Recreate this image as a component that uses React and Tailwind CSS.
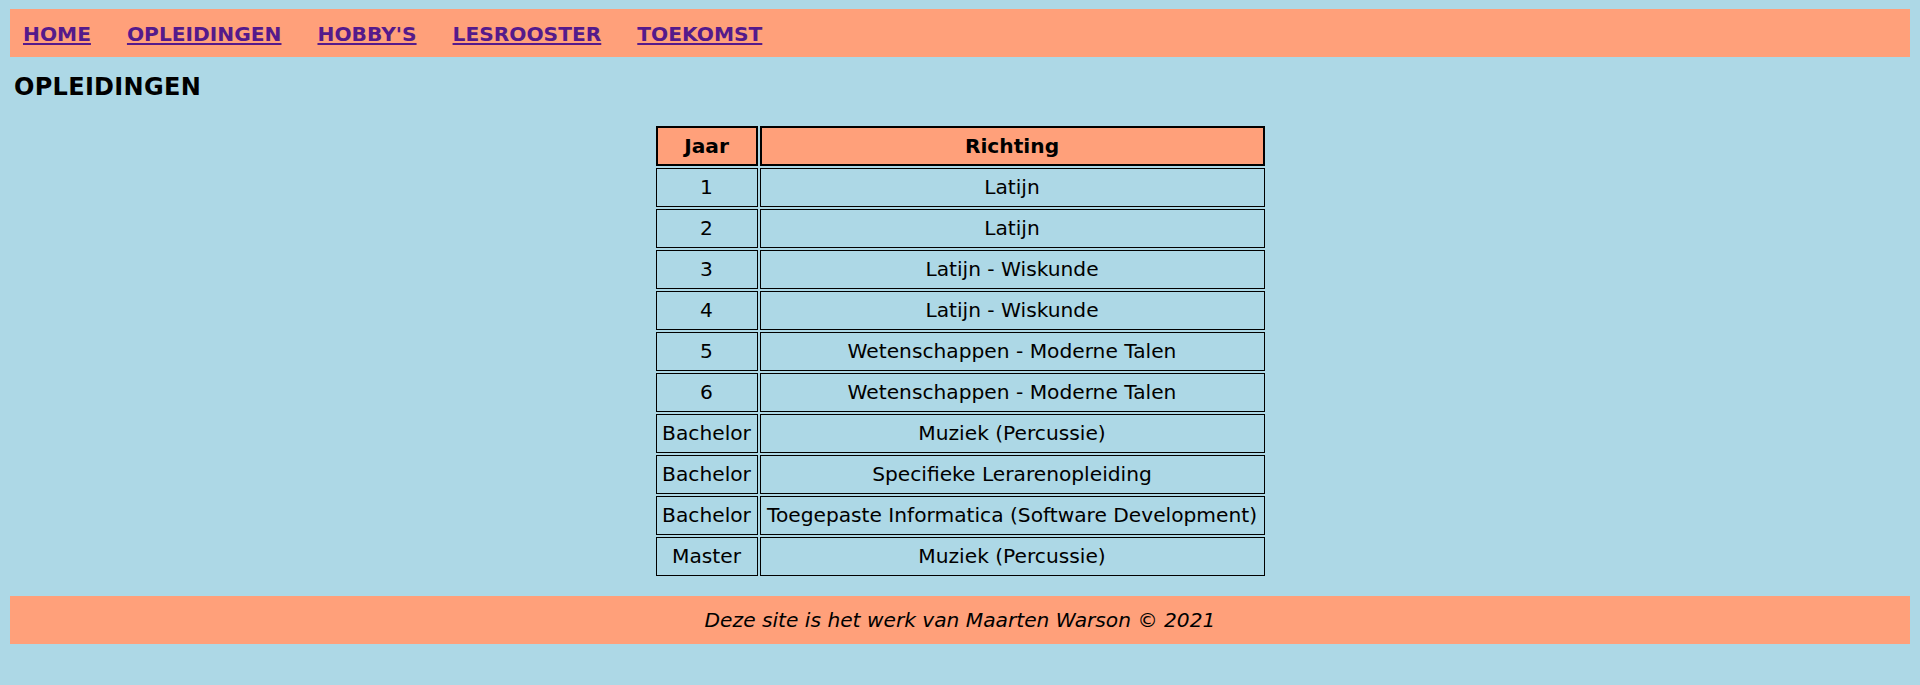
const links = ['HOME', 'OPLEIDINGEN', "HOBBY'S", 'LESROOSTER', 'TOEKOMST'];

const rows = [
  ['1', 'Latijn'],
  ['2', 'Latijn'],
  ['3', 'Latijn - Wiskunde'],
  ['4', 'Latijn - Wiskunde'],
  ['5', 'Wetenschappen - Moderne Talen'],
  ['6', 'Wetenschappen - Moderne Talen'],
  ['Bachelor', 'Muziek (Percussie)'],
  ['Bachelor', 'Specifieke Lerarenopleiding'],
  ['Bachelor', 'Toegepaste Informatica (Software Development)'],
  ['Master', 'Muziek (Percussie)'],
];

export default function App() {
  return (
    <div className="min-h-[685px] bg-[#add8e6] pt-[9px] text-black font-['Verdana','DejaVu_Sans',sans-serif] text-[20.2px]">
      <nav className="mx-[10px] h-[48px] bg-[#ffa07a] flex items-center gap-[36px] px-[13px] pt-[2px]">
        {links.map((l) => (
          <a
            key={l}
            href="#"
            className="font-bold underline text-[#551a8b] leading-[23px]"
          >
            {l}
          </a>
        ))}
      </nav>

      <h2 className="mt-[16px] pl-[14px] text-[24px] font-bold leading-[28px] tracking-[0.3px]">
        OPLEIDINGEN
      </h2>

      <table className="mt-[23px] mx-auto border-separate border-spacing-[2px] table-fixed w-[613px]">
        <thead>
          <tr>
            <th className="w-[102px] h-[40px] border-2 border-black bg-[#ffa07a] font-bold leading-[23px]">
              Jaar
            </th>
            <th className="w-[505px] h-[40px] border-2 border-black bg-[#ffa07a] font-bold leading-[23px]">
              Richting
            </th>
          </tr>
        </thead>
        <tbody>
          {rows.map(([jaar, richting], i) => (
            <tr key={i}>
              <td className="h-[39px] border border-black text-center leading-[23px] whitespace-nowrap">
                {jaar}
              </td>
              <td className="h-[39px] border border-black text-center leading-[23px] whitespace-nowrap">
                {richting}
              </td>
            </tr>
          ))}
        </tbody>
      </table>

      <footer className="mt-[18px] mx-[10px] h-[48px] bg-[#ffa07a] flex items-center justify-center italic leading-[23px]">
        Deze site is het werk van Maarten Warson © 2021
      </footer>
    </div>
  );
}
